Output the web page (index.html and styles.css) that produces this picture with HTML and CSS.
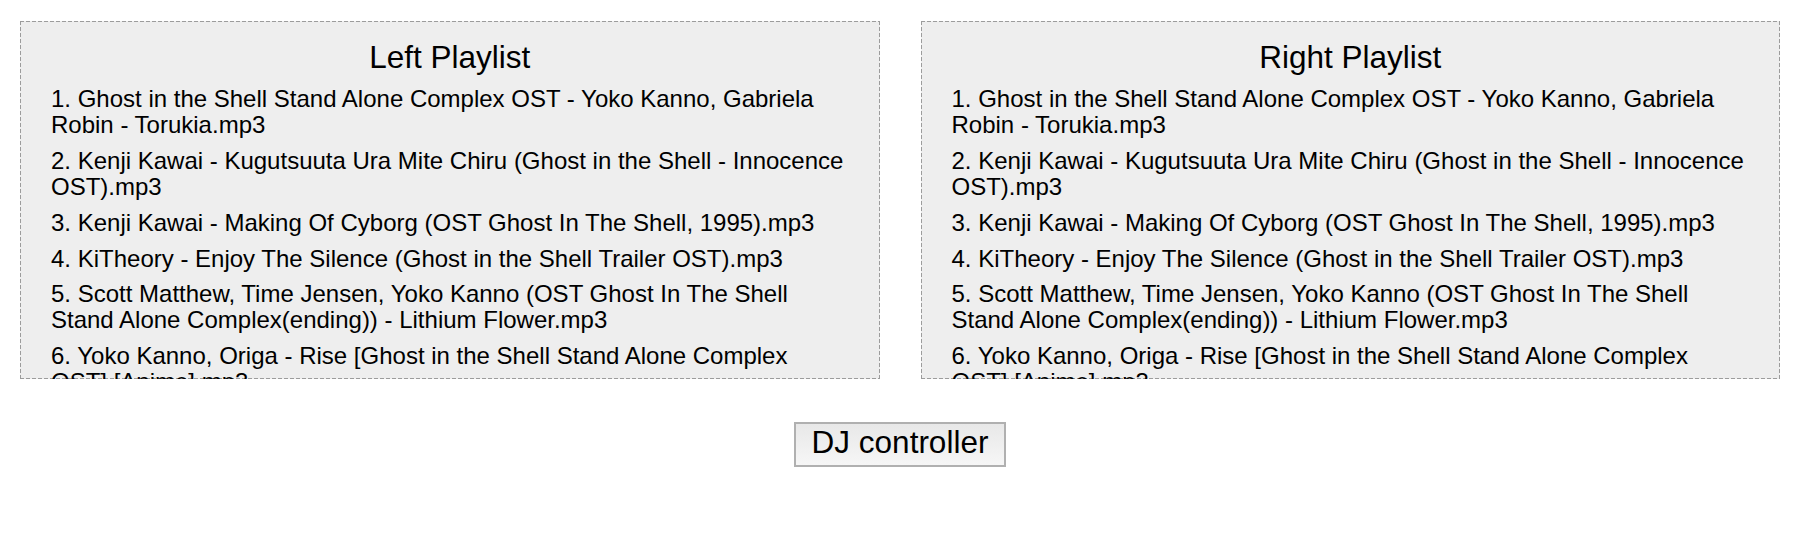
FILE: index.html
```html
<!DOCTYPE html>
<html lang="en">
<head>
<meta charset="utf-8">
<title>DJ</title>
<link rel="stylesheet" href="styles.css">
</head>
<body>
<div class="page">
  <div class="playlists">
    <section class="playlist">
      <h2 class="playlist-title">Left Playlist</h2>
      <ul class="tracks">
        <li class="track">1. Ghost in the Shell Stand Alone Complex OST - Yoko Kanno, Gabriela Robin - Torukia.mp3</li>
        <li class="track">2. Kenji Kawai - Kugutsuuta Ura Mite Chiru (Ghost in the Shell - Innocence OST).mp3</li>
        <li class="track">3. Kenji Kawai - Making Of Cyborg (OST Ghost In The Shell, 1995).mp3</li>
        <li class="track">4. KiTheory - Enjoy The Silence (Ghost in the Shell Trailer OST).mp3</li>
        <li class="track">5. Scott Matthew, Time Jensen, Yoko Kanno (OST Ghost In The Shell Stand Alone Complex(ending)) - Lithium Flower.mp3</li>
        <li class="track">6. Yoko Kanno, Origa - Rise [Ghost in the Shell Stand Alone Complex OST] [Anime].mp3</li>
      </ul>
    </section>
    <section class="playlist">
      <h2 class="playlist-title">Right Playlist</h2>
      <ul class="tracks">
        <li class="track">1. Ghost in the Shell Stand Alone Complex OST - Yoko Kanno, Gabriela Robin - Torukia.mp3</li>
        <li class="track">2. Kenji Kawai - Kugutsuuta Ura Mite Chiru (Ghost in the Shell - Innocence OST).mp3</li>
        <li class="track">3. Kenji Kawai - Making Of Cyborg (OST Ghost In The Shell, 1995).mp3</li>
        <li class="track">4. KiTheory - Enjoy The Silence (Ghost in the Shell Trailer OST).mp3</li>
        <li class="track">5. Scott Matthew, Time Jensen, Yoko Kanno (OST Ghost In The Shell Stand Alone Complex(ending)) - Lithium Flower.mp3</li>
        <li class="track">6. Yoko Kanno, Origa - Rise [Ghost in the Shell Stand Alone Complex OST] [Anime].mp3</li>
      </ul>
    </section>
  </div>
  <div class="controls">
    <button class="dj-button" type="button">DJ controller</button>
  </div>
</div>
</body>
</html>
```
FILE: styles.css
```css
html, body {
  margin: 0;
  padding: 0;
  background: #ffffff;
}

body {
  font-family: "Liberation Sans", Arial, Helvetica, sans-serif;
  color: #000000;
}

.page {
  padding-top: 21px;
}

.playlists {
  display: flex;
  gap: 41px;
  padding: 0 20px;
}

.playlist {
  flex: 1 1 0;
  box-sizing: border-box;
  height: 358px;
  overflow: hidden;
  border: none;
  padding: 17px 31px 0 31px;
  background:
    repeating-linear-gradient(to right, #9c9c9c 0 4px, transparent 4px 6px) left top / 100% 1px no-repeat,
    repeating-linear-gradient(to right, #9c9c9c 0 4px, transparent 4px 6px) left bottom / 100% 1px no-repeat,
    repeating-linear-gradient(to bottom, #9c9c9c 0 4px, transparent 4px 6px) left top / 1px 100% no-repeat,
    repeating-linear-gradient(to bottom, #9c9c9c 0 4px, transparent 4px 6px) right top / 1px 100% no-repeat,
    #eeeeee;
}

.playlist-title {
  margin: 0;
  font-size: 31.5px;
  line-height: 38px;
  font-weight: normal;
  text-align: center;
}

.tracks {
  list-style: none;
  margin: 10px 0 0 0;
  padding: 0;
}

.track {
  font-size: 24px;
  line-height: 26.2px;
  margin-bottom: 9.5px;
}

.controls {
  display: flex;
  justify-content: center;
  margin-top: 43px;
}

.dj-button {
  font-family: "Liberation Sans", Arial, Helvetica, sans-serif;
  font-size: 31.5px;
  line-height: 34px;
  color: #000000;
  padding: 1px 16px 6px;
  border: 2px solid #b0b0b0;
  border-radius: 0;
  background: linear-gradient(#e8e8e8, #f6f6f6);
}
```
